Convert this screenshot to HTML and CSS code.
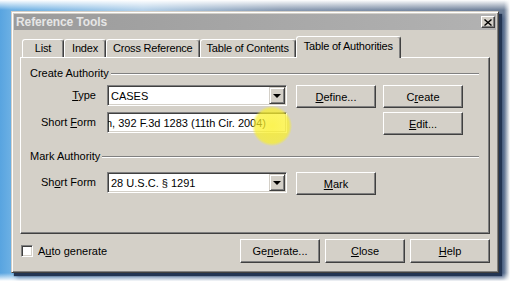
FILE: index.html
```html
<!DOCTYPE html>
<html lang="en">
<head>
    <meta charset="UTF-8">
    <meta name="viewport" content="width=device-width, initial-scale=1.0">
    <title>Reference Tools</title>
    <link rel="stylesheet" href="styles.css">
</head>
<body>
    <div class="screen">
        <div class="window">
            <div class="titlebar">
                <span class="title">Reference Tools</span>
                <button class="close-btn" aria-label="Close">
                    <svg width="8" height="7" viewBox="0 0 8 7"><path d="M0.5 0.5 L7.5 6.5 M7.5 0.5 L0.5 6.5" stroke="#000" stroke-width="1.4" fill="none"/></svg>
                </button>
            </div>
            <div class="dialog">
                <div class="tabs">
                    <div class="tab">List</div>
                    <div class="tab">Index</div>
                    <div class="tab">Cross Reference</div>
                    <div class="tab">Table of Contents</div>
                    <div class="tab active">Table of Authorities</div>
                </div>
                <div class="panel">
                    <div class="group-head">Create Authority</div>
                    <div class="form-grid">
                        <label class="field-label"><u>T</u>ype</label>
                        <div class="field combo">
                            <span class="field-text">CASES</span>
                            <span class="drop"><span class="arrow"></span></span>
                        </div>
                        <button class="btn"><u>D</u>efine...</button>
                        <button class="btn">C<u>r</u>eate</button>

                        <label class="field-label">Short <u>F</u>orm</label>
                        <div class="field">
                            <span class="field-text scrolled">n, 392 F.3d 1283 (11th Cir. 2004)</span>
                        </div>
                        <span></span>
                        <button class="btn"><u>E</u>dit...</button>
                    </div>

                    <div class="group-head mark-head">Mark Authority</div>
                    <div class="form-grid mark-grid">
                        <label class="field-label">Sh<u>o</u>rt Form</label>
                        <div class="field combo">
                            <span class="field-text">28 U.S.C. § 1291</span>
                            <span class="drop"><span class="arrow"></span></span>
                        </div>
                        <button class="btn"><u>M</u>ark</button>
                    </div>
                </div>
                <div class="footer">
                    <label class="check">
                        <span class="check-box"></span>
                        <span>A<u>u</u>to generate</span>
                    </label>
                    <div class="footer-buttons">
                        <button class="btn">Ge<u>n</u>erate...</button>
                        <button class="btn"><u>C</u>lose</button>
                        <button class="btn"><u>H</u>elp</button>
                    </div>
                </div>
            </div>
        </div>
        <div class="spotlight"></div>
    </div>
</body>
</html>
```

FILE: styles.css
```css
body, html {
    margin: 0;
    font-family: 'Liberation Sans', Arial, sans-serif;
    font-size: 11px;
    color: #000;
    background: #fff;
}

.screen {
    position: relative;
    width: 510px;
    height: 281px;
    box-sizing: border-box;
    padding: 11px 0 0 11px;
    overflow: hidden;
    background:
        linear-gradient(to left, #fff 0, rgba(255, 255, 255, 0) 6px),
        linear-gradient(to bottom, #fff 0, rgba(255, 255, 255, 0) 10px),
        linear-gradient(to top, #fff 0, rgba(255, 255, 255, 0) 8px),
        linear-gradient(to right, #58a4e0 0, #6cb0e4 11px, #b6d2ea 28%, #8b9cb3 55%, #6e7f98 100%);
}

/* classic window frame */
.window {
    width: 488px;
    height: 262px;
    box-sizing: border-box;
    display: flex;
    flex-direction: column;
    padding: 2px;
    background: #d4d0c8;
    border: 1px solid;
    border-color: #d4d0c8 #404040 #404040 #d4d0c8;
    box-shadow: inset 1px 1px #fff, inset -1px -1px #808080, 3px 3px 1px #233553, 5px 5px 4px rgba(40, 70, 120, 0.5);
}

.titlebar {
    height: 16px;
    display: flex;
    align-items: center;
    justify-content: space-between;
    padding: 0 1px 0 2px;
    background: linear-gradient(to right, #9b9b9b, #b2b2b2);
}

.title {
    font-size: 12px;
    font-weight: 700;
    letter-spacing: -0.1px;
    color: #e6e6e6;
}

.close-btn {
    width: 14px;
    height: 12px;
    padding: 0;
    display: flex;
    align-items: center;
    justify-content: center;
    background: #d4d0c8;
    border: 1px solid;
    border-color: #fff #404040 #404040 #fff;
    box-shadow: inset -1px -1px #808080;
}

.dialog {
    display: flex;
    flex-direction: column;
    padding: 6px 6px 0;
}

/* tabs */
.tabs {
    height: 21px;
    display: flex;
    align-items: flex-end;
    padding-left: 2px;
    letter-spacing: -0.2px;
}

.tab {
    height: 18px;
    min-width: 42px;
    box-sizing: border-box;
    padding: 0 6px;
    text-align: center;
    line-height: 17px;
    border: 1px solid;
    border-bottom: none;
    border-color: #fff #404040 #fff #fff;
    border-radius: 3px 3px 0 0;
    box-shadow: inset -1px 0 #808080;
    white-space: nowrap;
}

.tab.active {
    position: relative;
    z-index: 1;
    height: 22px;
    margin-bottom: -1px;
    padding: 0 7px;
    line-height: 19px;
    background: #d4d0c8;
}

.panel {
    height: 177px;
    box-sizing: border-box;
    padding: 9px 10px 0 9px;
    border: 1px solid;
    border-color: #fff #404040 #404040 #fff;
    box-shadow: inset -1px -1px #808080;
}

.group-head {
    display: flex;
    align-items: center;
    height: 13px;
    line-height: 13px;
}

.group-head::after {
    content: "";
    flex: 1;
    margin-left: 2px;
    border-top: 1px solid #808080;
    border-bottom: 1px solid #fff;
}

.mark-head {
    margin-top: 15px;
}

.form-grid {
    display: grid;
    grid-template-columns: 77px 180px 89px 87px;
    row-gap: 4px;
    align-items: start;
    margin-top: 5px;
}

.mark-grid {
    margin-top: 9px;
}

.field-label {
    line-height: 21px;
    text-align: right;
    padding-right: 11px;
}

.field {
    position: relative;
    height: 21px;
    box-sizing: border-box;
    display: flex;
    align-items: center;
    overflow: hidden;
    background: #fff;
    border: 1px solid;
    border-color: #808080 #fff #fff #808080;
    box-shadow: inset 1px 1px #404040, inset -1px -1px #d4d0c8;
    padding-left: 3px;
    white-space: nowrap;
}

.field-text {
    flex: 1;
}

.scrolled {
    margin-left: -5px;
}

.drop {
    width: 16px;
    height: 17px;
    box-sizing: border-box;
    margin-right: 1px;
    display: flex;
    align-items: center;
    justify-content: center;
    background: #d4d0c8;
    border: 1px solid;
    border-color: #d4d0c8 #404040 #404040 #d4d0c8;
    box-shadow: inset 1px 1px #fff, inset -1px -1px #808080;
}

.arrow {
    width: 0;
    height: 0;
    border-left: 4px solid transparent;
    border-right: 4px solid transparent;
    border-top: 4px solid #000;
}

.btn {
    justify-self: end;
    width: 80px;
    height: 23px;
    padding: 0;
    font: inherit;
    color: #000;
    background: #d4d0c8;
    border: 1px solid;
    border-color: #fff #404040 #404040 #fff;
    box-shadow: inset -1px -1px #808080;
}

.footer {
    height: 24px;
    margin-top: 5px;
    display: flex;
    align-items: center;
    justify-content: space-between;
    padding-left: 1px;
}

.footer .btn {
    height: 24px;
}

.check {
    display: flex;
    align-items: center;
    gap: 5px;
}

.check-box {
    width: 12px;
    height: 12px;
    box-sizing: border-box;
    background: #fff;
    border: 1px solid;
    border-color: #808080 #fff #fff #808080;
    box-shadow: inset 1px 1px #404040, inset -1px -1px #d4d0c8;
}

.footer-buttons {
    display: flex;
    gap: 5px;
}

/* cursor highlight from the screen recorder */
.spotlight {
    position: absolute;
    left: 252px;
    top: 106px;
    width: 40px;
    height: 40px;
    border-radius: 50%;
    background: radial-gradient(circle, rgba(250, 240, 40, 0.8) 0, rgba(250, 240, 40, 0.7) 60%, rgba(250, 240, 40, 0) 72%);
    pointer-events: none;
}
```
